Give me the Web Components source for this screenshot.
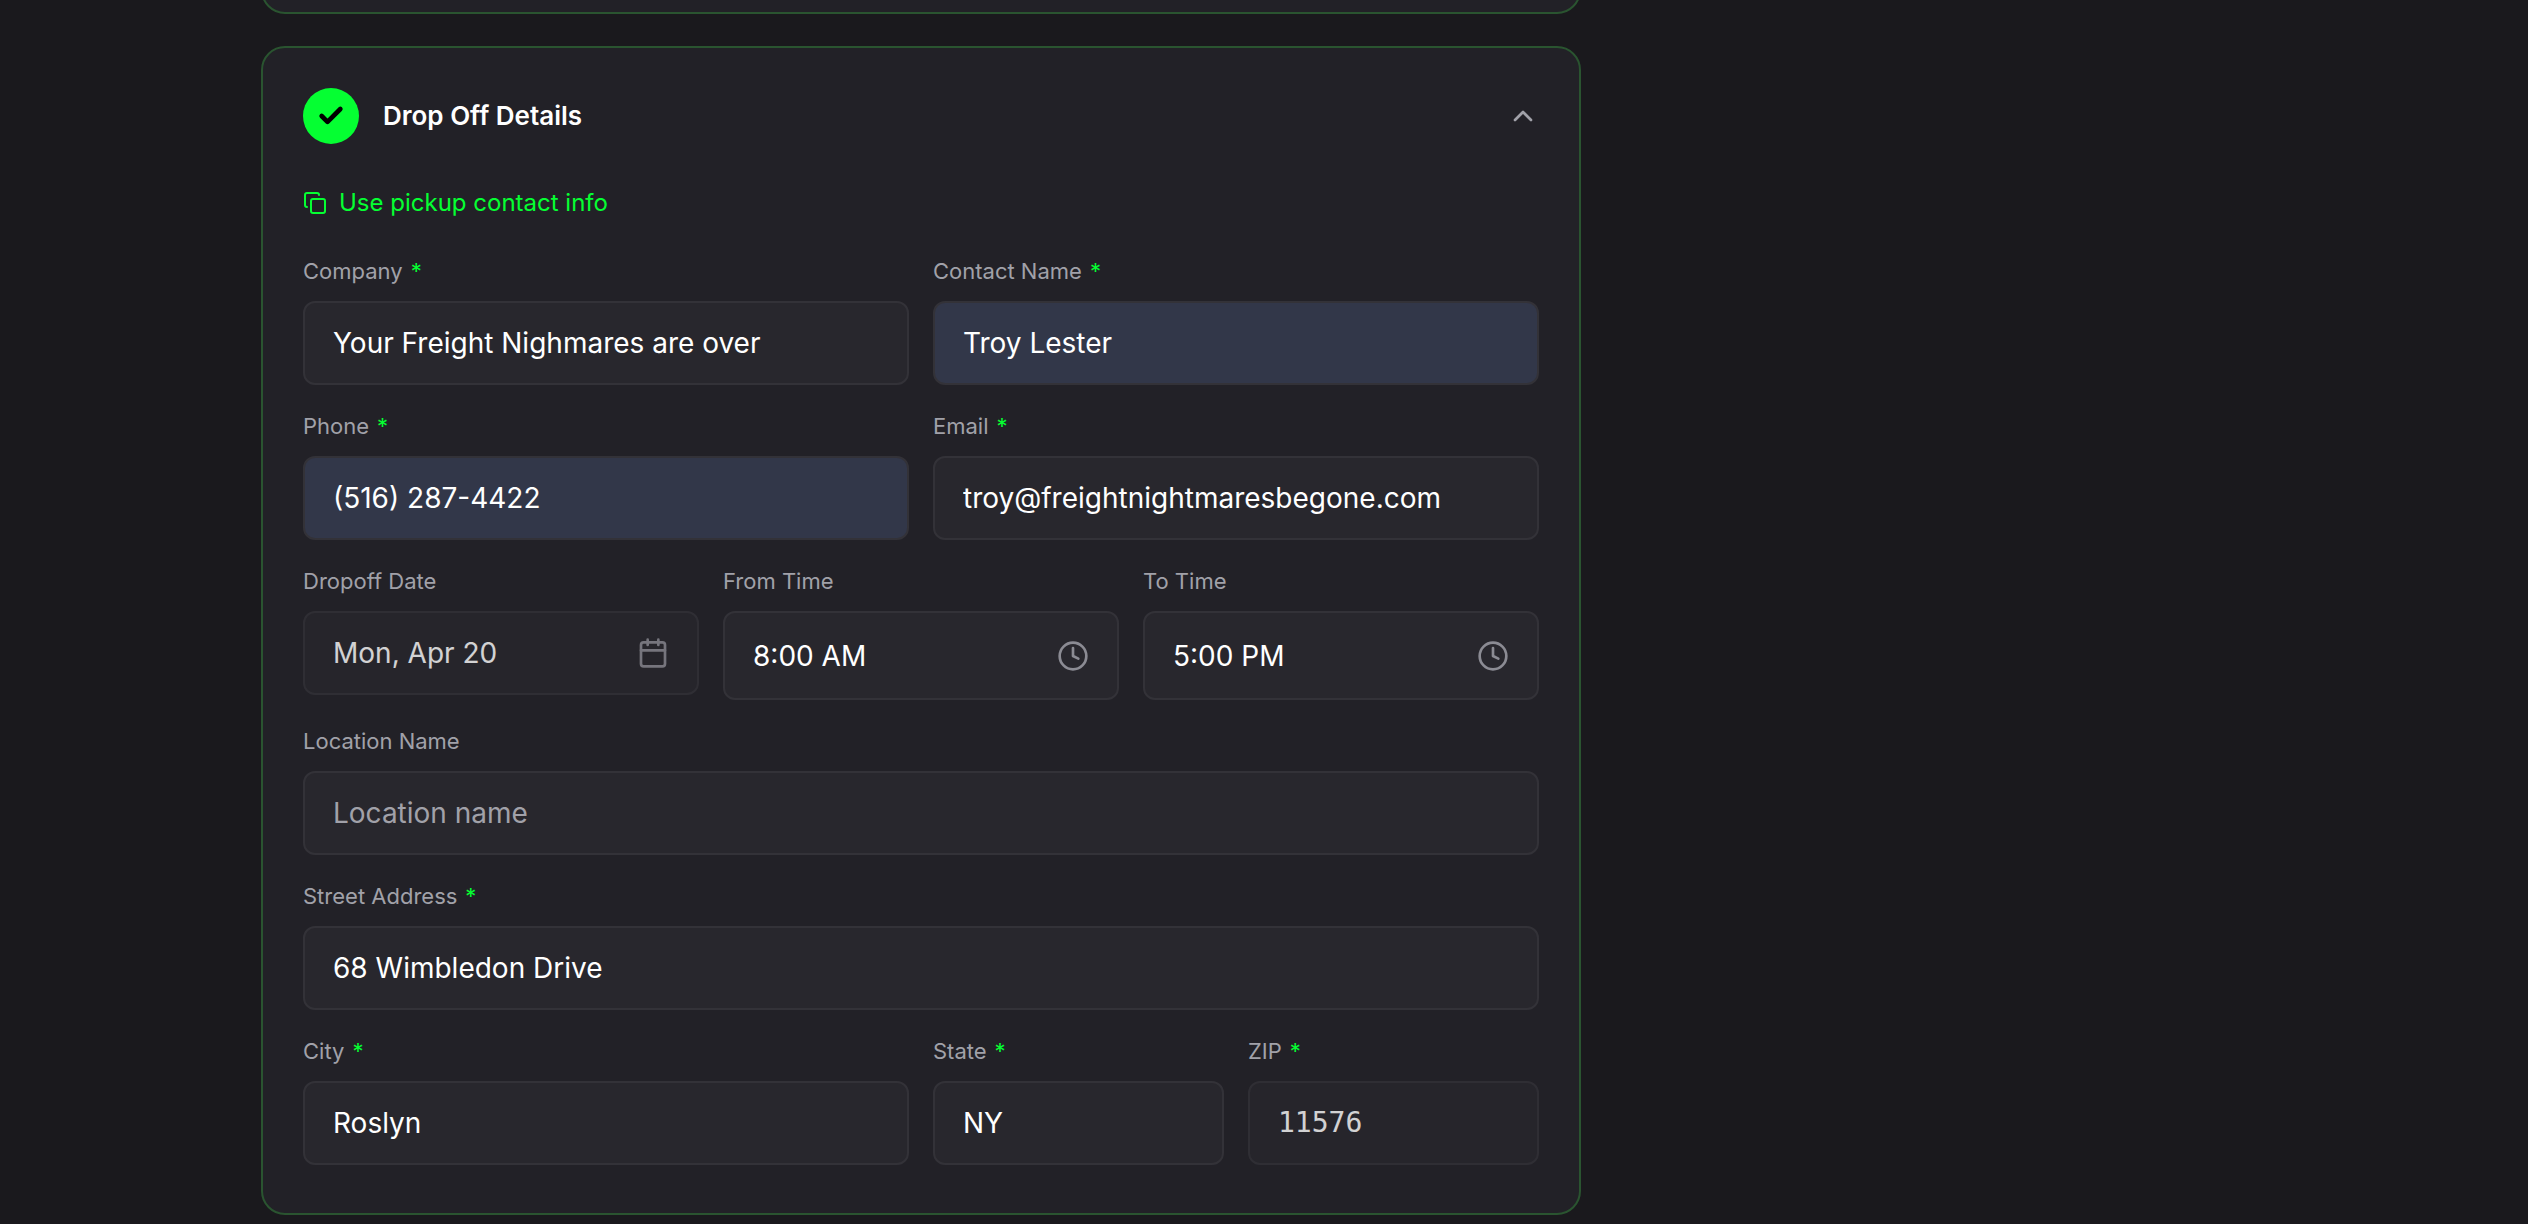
<!DOCTYPE html>
<html lang="en">
<head>
<meta charset="utf-8">
<title>Drop Off Details</title>
<style>
  :root {
    --page: #1a191d;
    --card: #222127;
    --card-line: #2a5430;
    --field: #28272d;
    --field-line: #333238;
    --autofill: #323749;
    --accent: #05ff32;
    --muted: #a1a1a9;
    --text: #ffffff;
  }
  body {
    margin: 0;
    background: var(--page);
    color: var(--text);
    font-family: Inter, "Liberation Sans", sans-serif;
    overflow-x: hidden;
  }
</style>
</head>
<body>
<booking-page>
  <step-card closed-top></step-card>
  <step-card heading="Drop Off Details">
    <copy-button>Use pickup contact info</copy-button>
    <form-row cols="2">
      <form-field label="Company" required value="Your Freight Nighmares are over"></form-field>
      <form-field label="Contact Name" required autofilled value="Troy Lester"></form-field>
    </form-row>
    <form-row cols="2">
      <form-field label="Phone" required autofilled type="tel" value="(516) 287-4422"></form-field>
      <form-field label="Email" required type="email" value="troy@freightnightmaresbegone.com"></form-field>
    </form-row>
    <form-row cols="3">
      <form-field label="Dropoff Date" dim icon="calendar" value="Mon, Apr 20"></form-field>
      <form-field label="From Time" tall icon="clock" value="8:00 AM"></form-field>
      <form-field label="To Time" tall icon="clock" value="5:00 PM"></form-field>
    </form-row>
    <form-row cols="1">
      <form-field label="Location Name" placeholder="Location name"></form-field>
    </form-row>
    <form-row cols="1">
      <form-field label="Street Address" required value="68 Wimbledon Drive"></form-field>
    </form-row>
    <form-row cols="4">
      <form-field label="City" required wide value="Roslyn"></form-field>
      <form-field label="State" required value="NY"></form-field>
      <form-field label="ZIP" required mono dim value="11576"></form-field>
    </form-row>
  </step-card>
</booking-page>

<script>
const ICONS = {
  calendar: '<path d="M8 2v4M16 2v4M3 10h18"/><rect x="3" y="4" width="18" height="18" rx="2"/>',
  clock: '<circle cx="12" cy="12" r="10"/><path d="M12 6v6l4 2"/>',
  check: '<path d="M20 6 9 17l-5-5"/>',
  up: '<path d="m18 15-6-6-6 6"/>',
  copy: '<rect x="8" y="8" width="14" height="14" rx="2"/><path d="M4 16c-1.100 0-2-.900-2-2V4c0-1.100.900-2 2-2h10c1.100 0 2 .900 2 2"/>'
};
const svg = (name, width) =>
  `<svg viewBox="0 0 24 24" fill="none" stroke="currentColor" stroke-width="${width}" stroke-linecap="round" stroke-linejoin="round" aria-hidden="true">${ICONS[name]}</svg>`;

class BookingPage extends HTMLElement {
  constructor() {
    super();
    this.attachShadow({ mode: 'open' }).innerHTML = `
      <style>
        :host { display: block; }
        main {
          display: flex; flex-direction: column; gap: 32px;
          width: 1320px; max-width: 100%;
          box-sizing: border-box;
          margin-left: 261px;
        }
      </style>
      <main><slot></slot></main>`;
  }
}

class StepCard extends HTMLElement {
  constructor() {
    super();
    this.attachShadow({ mode: 'open' });
  }
  connectedCallback() {
    const heading = this.getAttribute('heading');
    this.shadowRoot.innerHTML = `
      <style>
        :host {
          display: block; box-sizing: border-box;
          border: 2px solid var(--card-line); border-radius: 24px;
          background: var(--card);
          padding: 40px 40px 48px;
        }
        :host([closed-top]) {
          padding: 0; height: 48px; margin-top: -34px;
        }
        header { display: flex; align-items: center; gap: 24px; margin-bottom: 40px; }
        .badge {
          display: grid; place-items: center;
          width: 56px; height: 56px; border-radius: 50%;
          background: var(--accent); color: #000;
        }
        .badge svg { width: 28px; height: 28px; }
        h2 { margin: 0; flex: 1; font-size: 26px; line-height: 40px; font-weight: 600; }
        button {
          display: grid; padding: 0; border: 0; background: none;
          color: var(--muted);
        }
        button svg { width: 32px; height: 32px; }
        .body { display: flex; flex-direction: column; gap: 25px; }
      </style>
      ${heading ? `<header>
        <span class="badge">${svg('check', 4)}</span>
        <h2>${heading}</h2>
        <button type="button" aria-label="Collapse">${svg('up', 2)}</button>
      </header>
      <div class="body"><slot></slot></div>` : ''}`;
  }
}

class CopyButton extends HTMLElement {
  constructor() {
    super();
    this.attachShadow({ mode: 'open' }).innerHTML = `
      <style>
        :host { display: block; margin-bottom: 8px; }
        button {
          display: flex; align-items: center; gap: 12px;
          padding: 0; border: 0; background: none; color: var(--accent);
          font: 400 24px/38px Inter, "Liberation Sans", sans-serif;
        }
        svg { width: 24px; height: 24px; }
      </style>
      <button type="button">${svg('copy', 2)}<slot></slot></button>`;
  }
}

class FormRow extends HTMLElement {
  constructor() {
    super();
    this.attachShadow({ mode: 'open' });
  }
  connectedCallback() {
    this.shadowRoot.innerHTML = `
      <style>
        :host {
          display: grid; gap: 24px; align-items: start;
          grid-template-columns: repeat(${this.getAttribute('cols')}, minmax(0, 1fr));
        }
      </style>
      <slot></slot>`;
  }
}

class FormField extends HTMLElement {
  constructor() {
    super();
    this.attachShadow({ mode: 'open' });
  }
  connectedCallback() {
    const get = name => this.getAttribute(name) || '';
    const icon = get('icon');
    this.shadowRoot.innerHTML = `
      <style>
        :host { display: flex; flex-direction: column; gap: 14px; }
        :host([wide]) { grid-column: span 2; }
        label {
          display: flex; gap: 8px;
          font-size: 22px; line-height: 32px; font-weight: 400; color: var(--muted);
        }
        .star { color: var(--accent); }
        .box {
          display: flex; align-items: center; gap: 16px;
          box-sizing: border-box; height: 84px; padding: 0 28px;
          border: 2px solid var(--field-line); border-radius: 12px;
          background: var(--field);
        }
        :host([tall]) .box { height: 89px; }
        :host([autofilled]) .box { background: var(--autofill); }
        :host([dim]) .box { opacity: .8; }
        input {
          flex: 1; min-width: 0; width: 100%; height: 40px; padding: 0; border: 0; outline: 0;
          background: none; color: var(--text);
          font: 400 28px/40px Inter, "Liberation Sans", sans-serif;
        }
        :host([mono]) input { font-family: "DejaVu Sans Mono", "Liberation Mono", monospace; }
        input::placeholder { color: var(--muted); opacity: 1; }
        svg { width: 32px; height: 32px; flex: none; color: #8b8b93; }
      </style>
      <label for="control"><span>${get('label')}</span>${this.hasAttribute('required') ? '<span class="star">*</span>' : ''}</label>
      <div class="box">
        <input id="control" type="${get('type') || 'text'}" value="${get('value')}" placeholder="${get('placeholder')}">
        ${icon ? svg(icon, 2) : ''}
      </div>`;
  }
}

customElements.define('booking-page', BookingPage);
customElements.define('step-card', StepCard);
customElements.define('copy-button', CopyButton);
customElements.define('form-row', FormRow);
customElements.define('form-field', FormField);
</script>
</body>
</html>
